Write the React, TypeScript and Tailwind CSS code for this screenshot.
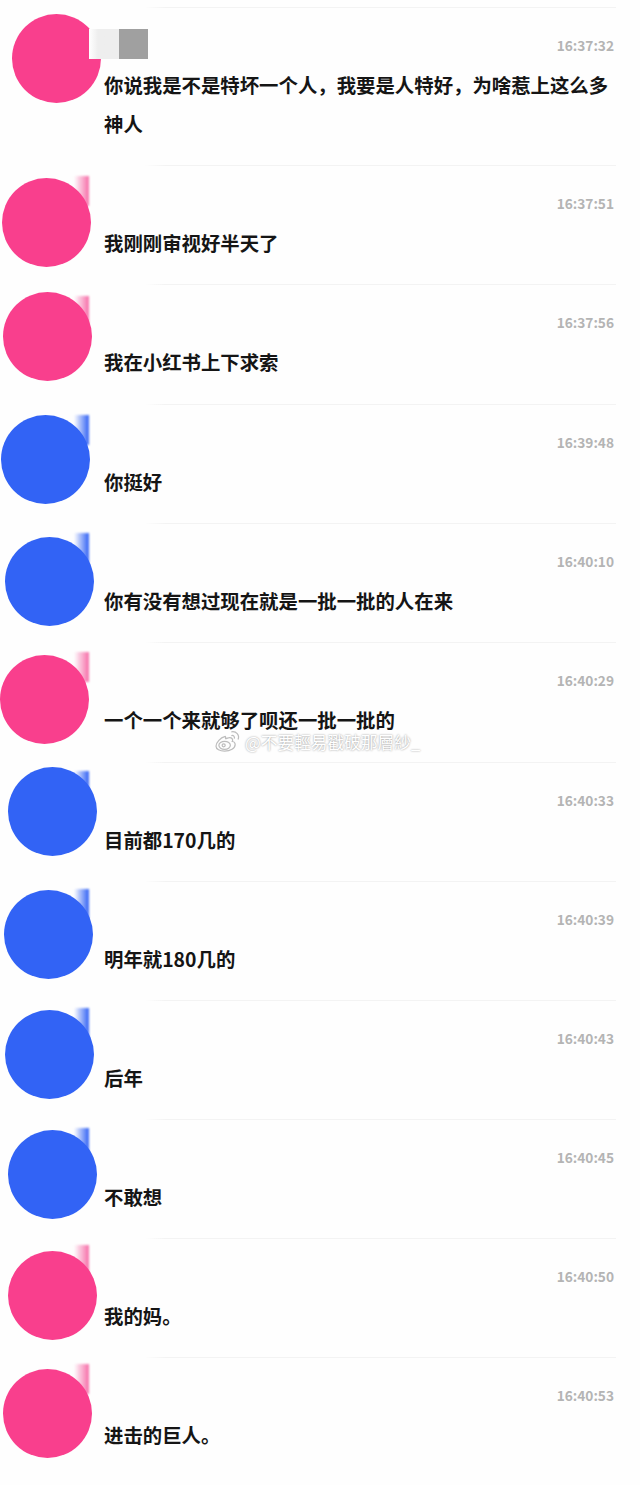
import React from 'react';

type Msg = {
    time: string;
    text: string;
    color: string;
    avatarPos: string;
    tab: string;
    rowH: string;
};

const PINK = 'bg-[#f93f8d]';
const BLUE = 'bg-[#3263f5]';
const TAB_PINK = 'to-[#f76fa9]';
const TAB_BLUE = 'to-[#3263f5]';

const msgs: Msg[] = [
    { time: '16:37:51', text: '我刚刚审视好半天了', color: PINK, avatarPos: 'ml-[2px] mt-[13px]', tab: `top-[11px] ${TAB_PINK}`, rowH: 'h-[119px]' },
    { time: '16:37:56', text: '我在小红书上下求索', color: PINK, avatarPos: 'ml-[3px] mt-[8px]', tab: `top-[12px] ${TAB_PINK}`, rowH: 'h-[120px]' },
    { time: '16:39:48', text: '你挺好', color: BLUE, avatarPos: 'ml-[1px] mt-[11px]', tab: `top-[11px] ${TAB_BLUE}`, rowH: 'h-[119px]' },
    { time: '16:40:10', text: '你有没有想过现在就是一批一批的人在来', color: BLUE, avatarPos: 'ml-[5px] mt-[14px]', tab: `top-[10px] ${TAB_BLUE}`, rowH: 'h-[119px]' },
    { time: '16:40:29', text: '一个一个来就够了呗还一批一批的', color: PINK, avatarPos: 'ml-0 mt-[13px]', tab: `top-[10px] ${TAB_PINK}`, rowH: 'h-[120px]' },
    { time: '16:40:33', text: '目前都170几的', color: BLUE, avatarPos: 'ml-[8px] mt-[5px]', tab: `top-[9px] ${TAB_BLUE}`, rowH: 'h-[119px]' },
    { time: '16:40:39', text: '明年就180几的', color: BLUE, avatarPos: 'ml-[4px] mt-[9px]', tab: `top-[8px] ${TAB_BLUE}`, rowH: 'h-[119px]' },
    { time: '16:40:43', text: '后年', color: BLUE, avatarPos: 'ml-[5px] mt-[10px]', tab: `top-[8px] ${TAB_BLUE}`, rowH: 'h-[119px]' },
    { time: '16:40:45', text: '不敢想', color: BLUE, avatarPos: 'ml-[8px] mt-[11px]', tab: `top-[9px] ${TAB_BLUE}`, rowH: 'h-[119px]' },
    { time: '16:40:50', text: '我的妈。', color: PINK, avatarPos: 'ml-[8px] mt-[13px]', tab: `top-[7px] ${TAB_PINK}`, rowH: 'h-[119px]' },
    { time: '16:40:53', text: '进击的巨人。', color: PINK, avatarPos: 'ml-[3px] mt-[12px]', tab: `top-[7px] ${TAB_PINK}`, rowH: 'h-[128px]' },
];

const cjk = "font-['Noto_Sans_CJK_SC',sans-serif]";
const timeCls = `text-[13.7px] leading-[18px] font-bold text-[#b4b4b4] ${cjk}`;
const textCls = `text-[19.4px] leading-[39px] font-bold text-[#151515] ${cjk}`;

// 区切り線: 左側はほぼ白に消えている
function Divider() {
    return <div className="h-px bg-linear-to-r from-[#fefefe] from-[8%] to-[#f3f3f3] to-[12%]" />;
}

function Avatar({ color, pos, tab }: { color: string; pos: string; tab?: string }) {
    return (
        <>
            {tab && <div className={`absolute left-[74px] w-[15px] h-[30px] blur-[0.8px] bg-linear-to-r from-transparent ${tab}`} />}
            <div className={`relative z-10 w-[89px] h-[89px] rounded-full blur-[0.7px] ${color} ${pos}`} />
        </>
    );
}

function WeiboLogo() {
    return (
        <svg width="27" height="23" viewBox="0 0 28 24" fill="none" stroke="#bdbdbd" strokeWidth="1.3">
            <path d="M11 7c-4 1-9 6-9 10 0 3 4 5 9 5 6 0 11-3 11-7 0-2-2-3-3-3 1-2 0-4-3-4-1 0-3 1-4 1 0-2 0-3-1-2z" />
            <ellipse cx="11" cy="16" rx="6" ry="4.2" />
            <circle cx="10" cy="16" r="1.6" />
            <path d="M18 6c2-1 4 1 3 3M18 2c5-1 9 3 7 8" />
        </svg>
    );
}

function Row({ msg }: { msg: Msg }) {
    return (
        <div className={`relative flex ${msg.rowH}`}>
            <div className="w-[104px] shrink-0">
                <Avatar color={msg.color} pos={msg.avatarPos} tab={msg.tab} />
            </div>
            <div className="w-[512px]">
                <Divider />
                <p className={`mt-[28px] pr-[2px] text-right ${timeCls}`}>{msg.time}</p>
                <p className={`mt-[11px] ${textCls}`}>{msg.text}</p>
            </div>
        </div>
    );
}

export default function App() {
    return (
        <div className="w-[640px] h-[1485px] bg-[#fefefe] overflow-hidden relative">
            <div className="pt-[7px]">
                {/* 1件目だけ2行+名前あり */}
                <div className="relative flex h-[158px]">
                    <div className="w-[104px] shrink-0">
                        <Avatar color={PINK} pos="ml-[12px] mt-[7px]" />
                    </div>
                    <div className="w-[512px]">
                        <Divider />
                        <div className="flex justify-between">
                            <div className="relative z-20 flex mt-[21px] -ml-[15px] blur-[0.5px]">
                                <div className="w-[30px] h-[30px] bg-linear-to-r from-white to-[#eeeeee] to-[30%]" />
                                <div className="w-[29px] h-[30px] bg-[#a0a0a0]" />
                            </div>
                            <p className={`mt-[28px] pr-[2px] ${timeCls}`}>16:37:32</p>
                        </div>
                        <p className={`mt-[6px] ${textCls}`}>你说我是不是特坏一个人，我要是人特好，为啥惹上这么多神人</p>
                    </div>
                </div>
                {msgs.map((m) => (
                    <Row key={m.time} msg={m} />
                ))}
            </div>
            {/* watermark */}
            <div className="absolute left-[214px] top-[729px] flex items-center gap-[4px]">
                <WeiboLogo />
                <span className={`mt-[2px] text-[16.7px] leading-[22px] text-white [text-shadow:0_0_2px_#8a8a8a] ${cjk}`}>@不要輕易戳破那層紗_</span>
            </div>
        </div>
    );
}
